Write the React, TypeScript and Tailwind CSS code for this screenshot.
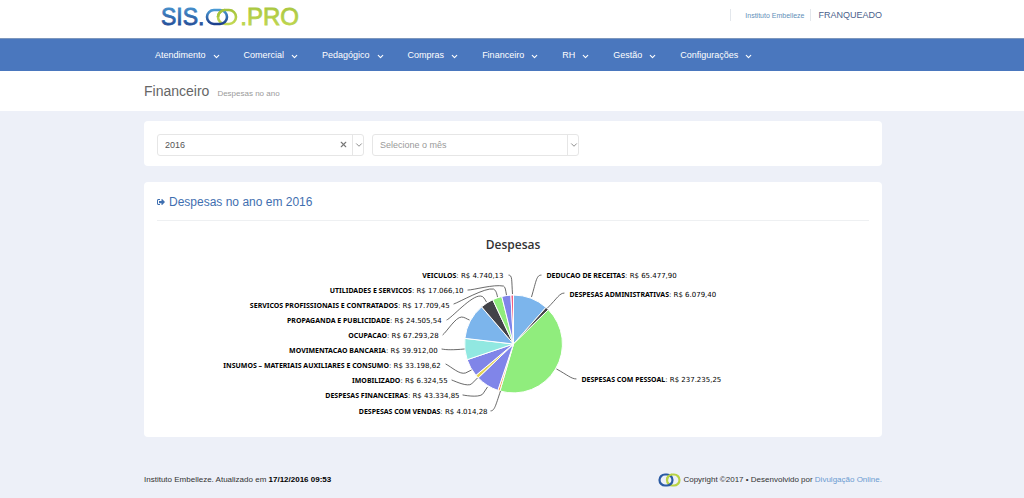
import { useState } from "react"
import type { ReactNode } from "react"
import { ChevronDown, X } from "lucide-react"
import { FaSignOutAlt } from "react-icons/fa"

const menu = ["Atendimento", "Comercial", "Pedagógico", "Compras", "Financeiro", "RH", "Gestão", "Configurações"]

type Slice = {
    name: string,
    value: number,
    color: string,
    side: "left" | "right",
    x: number,
    y: number,
    line: string
}

// label and connector coordinates are relative to the centre of the pie
const slices: Slice[] = [
    { name: "DEDUCAO DE RECEITAS", value: 65477.9, color: "#7cb5ec", side: "right", x: 33, y: -69, line: "M28 -69 C23 -69 23 -64 18 -47" },
    { name: "DESPESAS ADMINISTRATIVAS", value: 6079.4, color: "#434348", side: "right", x: 56, y: -50, line: "M51 -51 C46 -51 44 -46 34 -36" },
    { name: "DESPESAS COM PESSOAL", value: 237235.25, color: "#90ed7d", side: "right", x: 68, y: 35, line: "M63 35 C58 35 54 31 43 25" },
    { name: "DESPESAS COM VENDAS", value: 4014.28, color: "#f7a35c", side: "left", x: -26, y: 67, line: "M-23 67 C-19 67 -18 62 -13 47" },
    { name: "DESPESAS FINANCEIRAS", value: 43334.85, color: "#8085e9", side: "left", x: -54, y: 51, line: "M-51 51 C-46 52 -32 54 -30 49 L-26 43" },
    { name: "IMOBILIZADO", value: 6324.55, color: "#e4d354", side: "left", x: -66, y: 36, line: "M-62 36 C-57 38 -46 43 -42 40 L-36 34" },
    { name: "INSUMOS – MATERIAIS AUXILIARES E CONSUMO", value: 33198.62, color: "#8085e8", side: "left", x: -73, y: 21, line: "M-68 20 C-62 23 -54 31 -48 29 L-42 26" },
    { name: "MOVIMENTACAO BANCARIA", value: 39912, color: "#91e8e1", side: "left", x: -76, y: 6, line: "M-72 5 C-67 6 -60 6 -49 5" },
    { name: "OCUPACAO", value: 67293.28, color: "#7cb5ec", side: "left", x: -75, y: -9, line: "M-71 -9 C-67 -12 -58 -27 -52 -27 C-49 -27 -47 -25 -44 -24" },
    { name: "PROPAGANDA E PUBLICIDADE", value: 24505.54, color: "#434348", side: "left", x: -72, y: -24, line: "M-67 -24 C-62 -26 -42 -49 -33 -48 C-30 -48 -29 -45 -27 -42" },
    { name: "SERVICOS PROFISSIONAIS E CONTRATADOS", value: 17709.45, color: "#90ed7d", side: "left", x: -64, y: -39, line: "M-60 -40 C-54 -42 -28 -57 -20 -55 C-18 -54 -17 -52 -16 -47" },
    { name: "UTILIDADES E SERVICOS", value: 17066.1, color: "#8085e9", side: "left", x: -50, y: -54, line: "M-46 -54 C-40 -54 -20 -60 -10 -58 C-8 -57 -8 -54 -7 -49" },
    { name: "VEICULOS", value: 4740.13, color: "#f15c80", side: "left", x: -10, y: -69, line: "M-5 -69 C-1 -69 -2 -64 -1 -50" },
]

const RADIUS = 49

const money = (value: number) => {
    const [int, dec] = value.toFixed(2).split(".")
    return "R$ " + int.replace(/\B(?=(\d{3})+$)/g, ".") + "," + dec
}

const slicePaths = () => {
    const total = slices.reduce((sum, s) => sum + s.value, 0)
    let angle = -Math.PI / 2
    return slices.map((s) => {
        const end = angle + (s.value / total) * Math.PI * 2
        const large = end - angle > Math.PI ? 1 : 0
        const d = `M0 0 L${RADIUS * Math.cos(angle)} ${RADIUS * Math.sin(angle)} A${RADIUS} ${RADIUS} 0 ${large} 1 ${RADIUS * Math.cos(end)} ${RADIUS * Math.sin(end)} Z`
        angle = end
        return d
    })
}

const Container = ({ children, className = "" }: { children: ReactNode, className?: string }) => (
    <div className={`mx-auto w-full max-w-[740px] pl-0.5 ${className}`}>{children}</div>
)

const Logo = () => (
    <svg viewBox="-2 -6 144 34" className="h-[34px] w-36" role="img" aria-label="SIS.OO.PRO">
        <defs>
            <linearGradient id="blue" x1="0" y1="0" x2="0" y2="1">
                <stop offset="0" stopColor="#4a9ad4" />
                <stop offset="1" stopColor="#1c3f8c" />
            </linearGradient>
            <linearGradient id="green" x1="0" y1="0" x2="0" y2="1">
                <stop offset="0" stopColor="#a5c43c" />
                <stop offset="1" stopColor="#c3d954" />
            </linearGradient>
        </defs>
        <text x="-1" y="19" fontSize="23" fill="url(#blue)" stroke="url(#blue)" strokeWidth="0.8" className="font-['Liberation_Sans',sans-serif]">SIS.</text>
        <rect x="56" y="4" width="18" height="14" rx="7" fill="none" stroke="url(#green)" strokeWidth="2.6" />
        <rect x="45" y="4" width="20" height="14" rx="7" fill="none" stroke="url(#blue)" strokeWidth="2.6" />
        <path d="M63 4 A7 7 0 0 0 56 11" fill="none" stroke="#a5c43c" strokeWidth="2.6" />
        <text x="137" y="19" textAnchor="end" fontSize="24" fill="url(#green)" stroke="url(#green)" strokeWidth="0.8" className="font-['Liberation_Sans',sans-serif]">.PRO</text>
    </svg>
)

const Rings = () => (
    <svg viewBox="0 0 23 14" className="h-3.5 w-[23px]" aria-hidden="true">
        <rect x="9" y="1.5" width="12.5" height="11" rx="5.5" fill="none" stroke="#b9d345" strokeWidth="2.2" />
        <rect x="1.5" y="1.5" width="13" height="11" rx="5.5" fill="none" stroke="#2b5ba3" strokeWidth="2.2" />
        <path d="M14 1.5 A5.500 5.500 0 0 0 9 7" fill="none" stroke="#b9d345" strokeWidth="2.2" />
    </svg>
)

const PieChart = () => {
    const paths = slicePaths()
    return (
        <svg viewBox="-357 -84 713 160" className="h-40 w-full" role="img" aria-label="Despesas">
            {slices.map((s, i) => (
                <path key={s.name} d={paths[i]} fill={s.color} stroke="#fff" strokeWidth="1" strokeLinejoin="round" />
            ))}
            {slices.map((s) => (
                <g key={s.name}>
                    <path d={s.line} fill="none" stroke="#444" strokeWidth="0.8" />
                    <text x={s.x} y={s.y + 3} textAnchor={s.side === "left" ? "end" : "start"} fill="#000" fontSize="7" className="font-['DejaVu_Sans',sans-serif]">
                        <tspan className="font-['Noto_Sans',sans-serif] font-bold">{s.name}</tspan>: {money(s.value)}
                    </text>
                </g>
            ))}
        </svg>
    )
}

export default function App() {
    const [year, setYear] = useState("2016")
    const [month, setMonth] = useState("")

    return (
        <div className="min-h-screen bg-[#edf0f8] font-['Liberation_Sans',Arial,sans-serif] text-[#333]">
            <header className="bg-white">
                <Container className="flex h-[38px] justify-between">
                    <a href="#" className="ml-4"><Logo /></a>
                    <div className="mt-[9px] flex h-3 items-center">
                        <a href="#" className="flex h-full items-center border-l border-[#e3e7ec] pl-3.5 pr-1.5 pt-0.5 text-[7px] text-[#5f8fb8]">Instituto Embelleze</a>
                        <a href="#" className="flex h-full items-center border-l border-[#e3e7ec] pl-[7px] pt-0.5 text-[9px] text-[#4a5f8c]">FRANQUEADO</a>
                    </div>
                </Container>
            </header>

            <nav className="border-t border-[#7d97bd] bg-[#4a77be]">
                <Container className="flex h-8">
                    {menu.map((item) => (
                        <button key={item} type="button" className="flex items-center gap-1.5 pl-[11px] pr-3 pt-0.5 text-[9px] text-white">
                            {item}
                            <ChevronDown size={9} strokeWidth={3} />
                        </button>
                    ))}
                </Container>
            </nav>

            <div className="bg-white">
                <Container className="flex h-10 items-baseline gap-2">
                    <h1 className="text-[14px] leading-10 text-[#666]">Financeiro</h1>
                    <small className="text-[8px] text-[#9a9a9a]">Despesas no ano</small>
                </Container>
            </div>

            <Container>
                <main>
                    <section className="mt-2.5 flex gap-2 rounded-sm bg-white px-[13px] pb-2.5 pt-[13px]">
                        <div className="relative w-[207px]">
                            <select aria-label="Ano" value={year} onChange={(e) => setYear(e.target.value)} className="block h-[22px] w-full appearance-none rounded-[3px] border border-[#e6e6e6] bg-white pl-[7px] pr-7 pt-0.5 text-[9px] text-[#555]">
                                <option value=""></option>
                                <option value="2016">2016</option>
                                <option value="2015">2015</option>
                            </select>
                            <button type="button" aria-label="Limpar" onClick={() => setYear("")} className="absolute right-4 top-1.5 text-[#777]">
                                <X size={9} strokeWidth={3} />
                            </button>
                            <span className="pointer-events-none absolute right-0 top-0 flex h-[22px] w-3 items-center justify-center border-l border-[#e6e6e6] text-[#777]">
                                <ChevronDown size={10} strokeWidth={2} />
                            </span>
                        </div>
                        <div className="relative w-[207px]">
                            <select aria-label="Mês" value={month} onChange={(e) => setMonth(e.target.value)} className="block h-[22px] w-full appearance-none rounded-[3px] border border-[#e6e6e6] bg-white pl-[7px] pr-4 pt-0.5 text-[9px] text-[#999]">
                                <option value="">Selecione o mês</option>
                                <option value="1">Janeiro</option>
                                <option value="2">Fevereiro</option>
                            </select>
                            <span className="pointer-events-none absolute right-0 top-0 flex h-[22px] w-3 items-center justify-center border-l border-[#e6e6e6] text-[#777]">
                                <ChevronDown size={10} strokeWidth={2} />
                            </span>
                        </div>
                    </section>

                    <section className="mt-4 rounded-sm bg-white px-[13px] pb-[17px]">
                        <h2 className="flex h-[39px] items-center gap-1 border-b border-[#eef0f2] pt-0.5 text-[12px] text-[#3f6fb0]">
                            <FaSignOutAlt size={8} />
                            Despesas no ano em 2016
                        </h2>
                        <h3 className="flex h-[39px] items-center justify-center pt-2 font-['Open_Sans',sans-serif] text-[12px] font-semibold text-[#333]">Despesas</h3>
                        <PieChart />
                    </section>
                </main>

                <footer className="mt-9 flex items-center justify-between pb-3 text-[8px]">
                    <p>Instituto Embelleze. Atualizado em <b className="text-black">17/12/2016 09:53</b></p>
                    <p className="flex items-center gap-0.5">
                        <Rings />
                        <span>Copyright ©2017 • Desenvolvido por <a href="#" className="text-[#6b9bd1]">Divulgação Online.</a></span>
                    </p>
                </footer>
            </Container>
        </div>
    )
}
